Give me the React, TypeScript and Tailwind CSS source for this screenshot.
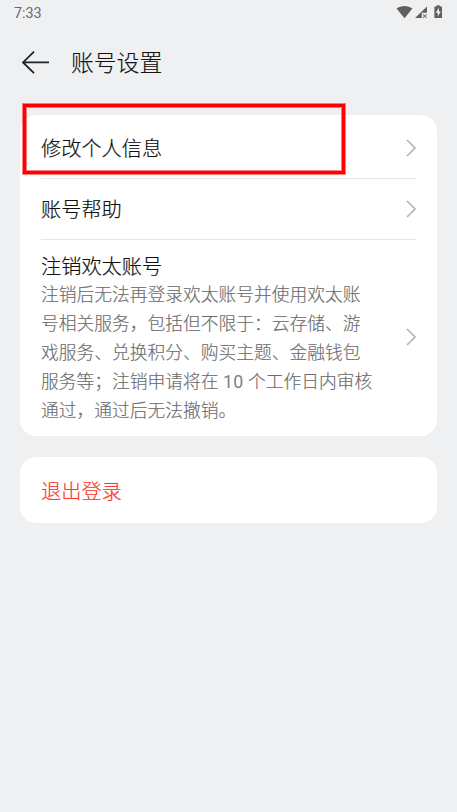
import React from 'react';

interface SettingsRowProps {
  title: string;
  className: string;
  lines?: React.ReactNode[];
}

const description: React.ReactNode[] = [
  '注销后无法再登录欢太账号并使用欢太账',
  '号相关服务，包括但不限于：云存储、游',
  '戏服务、兑换积分、购买主题、金融钱包',
  <>服务等；注销申请将在<span className="font-[Roboto] font-normal leading-none tracking-[0.15px] text-[#808080] [-webkit-text-stroke-width:0]"> 10 </span>个工作日内审核</>,
  '通过，通过后无法撤销。'
];

const Chevron: React.FC = () => (
  <svg className="shrink-0" width="10" height="18" viewBox="0 0 10 18" fill="none">
    <path d="M1 1L9 9L1 17" stroke="#b5b5b5" strokeWidth="1.6" />
  </svg>
);

const StatusBar: React.FC = () => (
  <div className="flex h-[26px] items-center justify-between pl-3.5 pr-[14px]">
    <span className="font-[Roboto] text-[14.3px] font-normal leading-[26px] text-[#66686a]">7:33</span>
    <svg width="47" height="26" viewBox="396 0 47 26" fill="#5f5f5f">
      <path d="M396.5 8.6C401 5.1 408 5.1 412.4 8.6L404.5 18.2Z" />
      <path d="M427 6.5V12.8H421.8V18H415Z" />
      <path d="M423 14.3L426.6 17.9M426.6 14.3L423 17.9" stroke="#777" strokeWidth="1.1" />
      <path d="M436.6 5.2H439.8V6.6H442V18H434.4V6.6H436.6Z" />
      <path d="M439 7.8L435.8 12.8H437.7V16.6L440.9 11.4H439Z" fill="#eff0f2" />
    </svg>
  </div>
);

const Header: React.FC = () => (
  <header className="flex h-[72px] items-center pl-[21px]">
    <svg width="29" height="24" viewBox="0 0 29 24" fill="none">
      <path d="M28 12.4H2M13 1.6L2 12.4L13 23.2" stroke="#202122" strokeWidth="1.8" />
    </svg>
    <h1 className="ml-[21px] text-[22.8px] font-light leading-8 text-[#111] [-webkit-text-stroke:0.15px]">账号设置</h1>
  </header>
);

const SettingsRow: React.FC<SettingsRowProps> = ({ title, className, lines }) => (
  <div className={`flex items-center justify-between ${className}`}>
    <div>
      <div className="text-[20.2px] leading-[26px] text-[#111] [-webkit-text-stroke:0.2px]">{title}</div>
      {lines && (
        <div className="mb-[-3px] text-[17.75px] leading-[29px] text-[#6c6c6c] [-webkit-text-stroke:0.15px]">
          {lines.map((line, index) => (
            <p key={index} className="whitespace-nowrap">{line}</p>
          ))}
        </div>
      )}
    </div>
    <Chevron />
  </div>
);

const App: React.FC = () => {
  return (
    <div className="relative h-[812px] w-[457px] overflow-hidden bg-[#eff0f2] font-['Noto_Sans_CJK_SC',sans-serif] font-light">
      <StatusBar />
      <Header />

      <main className="flex flex-col gap-[21px] px-5 pt-[17px]">
        <section className="h-[321px] rounded-[16px] bg-white pl-[21px] pr-[21px]">
          <SettingsRow title="修改个人信息" className="h-16 border-b border-[#e6e6e6] pt-[3px]" />
          <SettingsRow title="账号帮助" className="h-[61px] border-b border-[#e6e6e6]" />
          <SettingsRow title="注销欢太账号" className="h-[194px]" lines={description} />
        </section>

        <section className="flex h-[66px] items-center rounded-[16px] bg-white pl-[21px] pt-px">
          <button className="text-[20.2px] leading-[26px] text-[#f93a28] [-webkit-text-stroke:0.2px]">退出登录</button>
        </section>
      </main>

      {/* Highlight over the first entry */}
      <div className="pointer-events-none absolute left-[23px] top-[104px] h-[70px] w-[322px] border-3 border-[#ff0000] shadow-[0_0_0_1px_rgba(255,0,0,0.5),inset_0_0_0_1px_rgba(255,0,0,0.5)]" />
    </div>
  );
};

export default App;
